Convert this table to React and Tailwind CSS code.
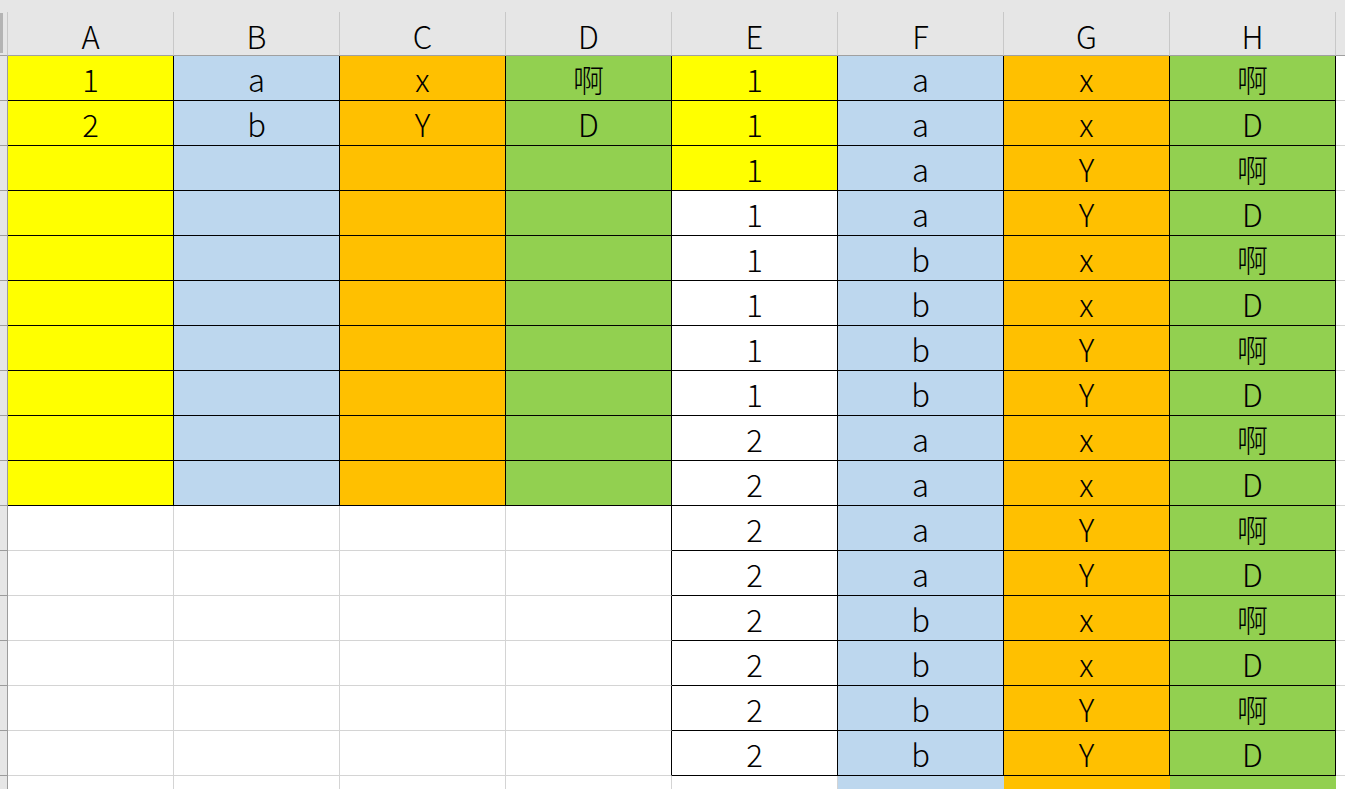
import React from "react";

const Y = "bg-[#ffff00]";
const B = "bg-[#bdd7ee]";
const O = "bg-[#ffc000]";
const G = "bg-[#92d050]";

const left = [
  ["1", "a", "x", "啊"],
  ["2", "b", "Y", "D"],
];

const right = [];
for (const n of ["1", "2"])
  for (const l of ["a", "b"])
    for (const c of ["x", "Y"])
      for (const d of ["啊", "D"]) right.push([n, l, c, d]);

function Cell({ text, bg, kind }) {
  let border = "border-[#d4d4d4]";
  if (kind === "black") border = "border-black";
  if (kind === "fill") border = "border-transparent";
  return (
    <div
      className={`w-[166px] h-[45px] shrink-0 border-r border-b ${border} ${bg || "bg-white"} flex items-center justify-center pt-[1px] text-[31px] leading-none text-black`}
    >
      {text}
    </div>
  );
}

export default function App() {
  const cols = ["A", "B", "C", "D", "E", "F", "G", "H"];
  const rows = [];
  for (let r = 0; r < 17; r++) {
    const cells = [];
    const lbgs = [Y, B, O, G];
    for (let c = 0; c < 4; c++) {
      if (r < 10) {
        cells.push(<Cell key={c} text={r < 2 ? left[r][c] : ""} bg={lbgs[c]} kind="black" />);
      } else {
        const isD = c === 3 && r < 16;
        cells.push(
          <div
            key={c}
            className={`w-[166px] h-[45px] shrink-0 border-b border-[#d4d4d4] border-r ${isD ? "border-r-black" : ""} bg-white`}
          />
        );
      }
    }
    if (r < 16) {
      const rb = [r < 3 ? Y : "bg-white", B, O, G];
      for (let c = 0; c < 4; c++) {
        cells.push(<Cell key={4 + c} text={right[r][c]} bg={rb[c]} kind="black" />);
      }
    } else {
      cells.push(<Cell key={4} text="" bg="bg-white" kind="grid" />);
      cells.push(<Cell key={5} text="" bg={B} kind="fill" />);
      cells.push(<Cell key={6} text="" bg={O} kind="fill" />);
      cells.push(<Cell key={7} text="" bg={G} kind="fill" />);
    }
    rows.push(
      <div key={r} className="flex">
        <div className="w-[8px] h-[45px] shrink-0 bg-[#e6e6e6] border-r border-b border-[#9c9c9c]" />
        {cells}
        <div className="w-[20px] h-[45px] shrink-0 bg-white border-b border-[#d4d4d4]" />
      </div>
    );
  }

  return (
    <div
      className="w-[1345px] h-[789px] overflow-hidden bg-white"
      style={{ fontFamily: '"Noto Sans CJK SC", "Noto Sans", sans-serif', fontWeight: 300 }}
    >
      <div className="h-[12px] bg-[#e6e6e6]" />
      <div className="flex">
        <div className="relative w-[8px] h-[44px] shrink-0 bg-[#e6e6e6] border-r border-b border-[#a0a0a0] border-r-[#c8c8c8]">
          <div className="absolute left-0 top-[1px] w-[3px] h-[40px] bg-[#b4b4b4]" />
        </div>
        {cols.map((c) => (
          <div
            key={c}
            className="w-[166px] h-[44px] shrink-0 bg-[#e6e6e6] border-r border-r-[#c8c8c8] border-b border-b-[#a0a0a0] flex items-center justify-center pt-[4px] text-[31px] leading-none text-black"
          >
            {c}
          </div>
        ))}
        <div className="w-[20px] h-[44px] shrink-0 bg-[#e6e6e6] border-b border-[#a0a0a0]" />
      </div>
      {rows}
    </div>
  );
}
